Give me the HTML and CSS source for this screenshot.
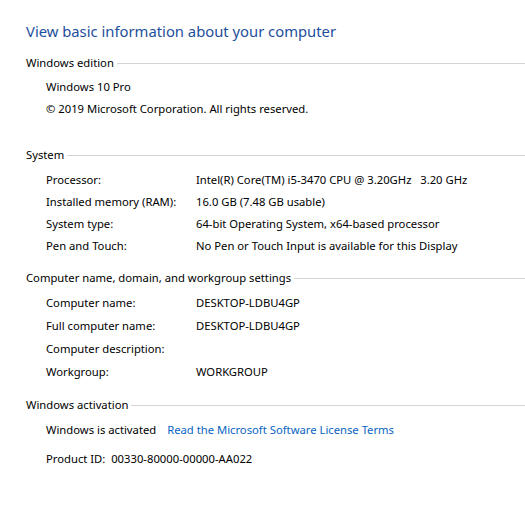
FILE: index.html
```html
<!DOCTYPE html>
<html lang="en">
<head>
    <meta charset="UTF-8">
    <title>System</title>
    <link rel="stylesheet" href="styles.css">
</head>
<body>
    <div class="page">
        <h1 class="title">View basic information about your computer</h1>

        <div class="section edition">
            <div class="section-head"><span>Windows edition</span></div>
            <div class="plain">
                <p>Windows 10 Pro</p>
                <p>© 2019 Microsoft Corporation. All rights reserved.</p>
            </div>
        </div>

        <div class="section system">
            <div class="section-head"><span>System</span></div>
            <div class="rows">
                <div class="label">Processor:</div><div>Intel(R) Core(TM) i5-3470 CPU @ 3.20GHz&nbsp;&nbsp; 3.20 GHz</div>
                <div class="label">Installed memory (RAM):</div><div>16.0 GB (7.48 GB usable)</div>
                <div class="label">System type:</div><div>64-bit Operating System, x64-based processor</div>
                <div class="label">Pen and Touch:</div><div>No Pen or Touch Input is available for this Display</div>
            </div>
        </div>

        <div class="section names">
            <div class="section-head"><span>Computer name, domain, and workgroup settings</span></div>
            <div class="rows">
                <div class="label">Computer name:</div><div>DESKTOP-LDBU4GP</div>
                <div class="label">Full computer name:</div><div>DESKTOP-LDBU4GP</div>
                <div class="label">Computer description:</div><div></div>
                <div class="label">Workgroup:</div><div>WORKGROUP</div>
            </div>
        </div>

        <div class="section">
            <div class="section-head"><span>Windows activation</span></div>
            <div class="activation">
                <p>Windows is activated <a href="#" class="link">Read the Microsoft Software License Terms</a></p>
                <p class="product">Product ID:&nbsp; 00330-80000-00000-AA022</p>
            </div>
        </div>
    </div>
</body>
</html>
```

FILE: styles.css
```css
body {
    margin: 0;
    background: #fff;
    color: #000;
    font-family: "Noto Sans", "Open Sans", sans-serif;
    font-size: 11.25px;
}
.page {
    padding: 20px 0 0 26px;
}
.title {
    margin: 0 0 11px;
    font-size: 14.8px;
    font-weight: normal;
    color: #1e4f9c;
    line-height: 22px;
}
.section-head {
    display: flex;
    align-items: center;
    height: 18px;
}
.section-head::after {
    content: "";
    flex: 1;
    height: 1px;
    margin: 2px 0 0 3px;
    background: #d5d5d5;
}
.plain, .rows, .activation {
    padding-left: 20px;
    padding-top: 5px;
}
.plain p, .activation p {
    margin: 0;
    line-height: 22px;
}
.edition {
    margin-bottom: 25px;
}
.rows {
    display: grid;
    grid-template-columns: 150px 1fr;
    grid-auto-rows: 22px;
    align-items: center;
}
.system {
    margin-bottom: 12px;
}
.names {
    margin-bottom: 12px;
}
.names .rows {
    grid-auto-rows: 23px;
    padding-top: 5px;
}
.activation {
    padding-top: 6px;
}
.activation .product {
    margin-top: 7px;
}
.link {
    margin-left: 8px;
    color: #0a64c2;
    text-decoration: none;
}
```
